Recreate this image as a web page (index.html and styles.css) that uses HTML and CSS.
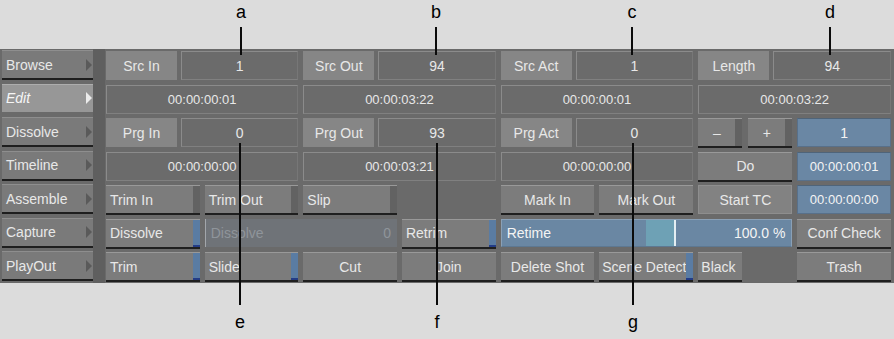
FILE: index.html
```html
<!DOCTYPE html>
<html lang="en">
<head>
    <meta charset="UTF-8">
    <title>Edit Menu</title>
    <link rel="stylesheet" href="styles.css">
</head>
<body>
    <div class="stage">
        <div class="panel">
            <!-- Left menu -->
            <nav class="menu">
                <div class="menu-btn"><span>Browse</span><i class="arrow"></i></div>
                <div class="menu-btn active"><span>Edit</span><i class="arrow"></i></div>
                <div class="menu-btn"><span>Dissolve</span><i class="arrow"></i></div>
                <div class="menu-btn"><span>Timeline</span><i class="arrow"></i></div>
                <div class="menu-btn"><span>Assemble</span><i class="arrow"></i></div>
                <div class="menu-btn"><span>Capture</span><i class="arrow"></i></div>
                <div class="menu-btn"><span>PlayOut</span><i class="arrow"></i></div>
            </nav>
            <div class="strip"></div>

            <!-- Main controls -->
            <main class="grid">
                <!-- row 1 -->
                <div class="group"><div class="label">Src In</div><div class="value">1</div></div>
                <div class="group"><div class="label">Src Out</div><div class="value">94</div></div>
                <div class="group"><div class="label">Src Act</div><div class="value">1</div></div>
                <div class="group"><div class="label">Length</div><div class="value">94</div></div>
                <!-- row 2 -->
                <div class="group"><div class="value time">00:00:00:01</div></div>
                <div class="group"><div class="value time">00:00:03:22</div></div>
                <div class="group"><div class="value time">00:00:00:01</div></div>
                <div class="group"><div class="value time">00:00:03:22</div></div>
                <!-- row 3 -->
                <div class="group"><div class="label">Prg In</div><div class="value">0</div></div>
                <div class="group"><div class="label">Prg Out</div><div class="value">93</div></div>
                <div class="group"><div class="label">Prg Act</div><div class="value">0</div></div>
                <div class="pair">
                    <div class="btn center"><span class="txt">–</span><span class="end"></span></div>
                    <div class="btn center"><span class="txt">+</span><span class="end"></span></div>
                </div>
                <div class="blue">1</div>
                <!-- row 4 -->
                <div class="group"><div class="value time">00:00:00:00</div></div>
                <div class="group"><div class="value time">00:00:03:21</div></div>
                <div class="group"><div class="value time">00:00:00:00</div></div>
                <div class="btn center"><span class="txt">Do</span></div>
                <div class="blue time">00:00:00:01</div>
                <!-- row 5 -->
                <div class="btn"><span class="txt">Trim In</span><span class="end"></span></div>
                <div class="btn"><span class="txt">Trim Out</span><span class="end"></span></div>
                <div class="btn"><span class="txt">Slip</span><span class="end"></span></div>
                <div class="empty"></div>
                <div class="btn center"><span class="txt">Mark In</span></div>
                <div class="btn center"><span class="txt">Mark Out</span></div>
                <div class="label flat">Start TC</div>
                <div class="blue time">00:00:00:00</div>
                <!-- row 6 -->
                <div class="btn"><span class="txt">Dissolve</span><span class="end on"></span></div>
                <div class="disabled span2"><span>Dissolve</span><span>0</span></div>
                <div class="btn"><span class="txt">Retrim</span><span class="end on"></span></div>
                <div class="slider span3">
                    <span class="fill"></span>
                    <span class="slider-txt">Retime</span>
                    <span class="slider-txt">100.0 %</span>
                </div>
                <div class="btn center"><span class="txt">Conf Check</span></div>
                <!-- row 7 -->
                <div class="btn"><span class="txt">Trim</span><span class="end on"></span></div>
                <div class="btn"><span class="txt">Slide</span><span class="end on"></span></div>
                <div class="btn center"><span class="txt">Cut</span></div>
                <div class="btn center"><span class="txt">Join</span></div>
                <div class="btn center"><span class="txt">Delete Shot</span></div>
                <div class="btn tight"><span class="txt">Scene Detect</span><span class="end on"></span></div>
                <div class="pair"><div class="btn tight"><span class="txt">Black</span></div></div>
                <div class="btn center"><span class="txt">Trash</span></div>
            </main>
        </div>

        <!-- Callouts -->
        <div class="callout top c-a"><span class="letter">a</span><span class="line"></span></div>
        <div class="callout top c-b"><span class="letter">b</span><span class="line"></span></div>
        <div class="callout top c-c"><span class="letter">c</span><span class="line"></span></div>
        <div class="callout top c-d"><span class="letter">d</span><span class="line"></span></div>
        <div class="callout bottom c-e"><span class="line"></span><span class="letter">e</span></div>
        <div class="callout bottom c-f"><span class="line"></span><span class="letter">f</span></div>
        <div class="callout bottom c-g"><span class="line"></span><span class="letter">g</span></div>
    </div>
</body>
</html>
```

FILE: styles.css
```css
body {
    margin: 0;
    background-color: #dcdcdc;
    font-family: "Liberation Sans", Arial, sans-serif;
}
.stage {
    position: relative;
    width: 894px;
    height: 339px;
    overflow: hidden;
}
.panel {
    margin-top: 49px;
    height: 234px;
    display: flex;
    background-color: #6a6a6a;
    color: #e8e8e8;
    font-size: 14px;
}
.menu {
    width: 91px;
    padding: 1px 0 0 2px;
    display: grid;
    grid-template-rows: repeat(7, 28px);
    row-gap: 5.5px;
}
.menu-btn {
    display: flex;
    align-items: center;
    justify-content: space-between;
    padding: 0 1px 0 4px;
    background-color: #7a7a7a;
    border-top: 1px solid #8e8e8e;
    box-shadow: 0 2px 0 #1e1e1e;
}
.menu-btn .arrow {
    width: 0;
    height: 0;
    border-left: 6px solid #5a5a5a;
    border-top: 6px solid transparent;
    border-bottom: 6px solid transparent;
}
.menu-btn.active {
    background-color: #979797;
    border-top-color: #adadad;
    box-shadow: none;
    font-style: italic;
    color: #f6f6f6;
}
.menu-btn.active .arrow {
    border-left-color: #ececec;
}
.strip {
    width: 12px;
    background-color: #5f5f5f;
}
.grid {
    flex: 1;
    padding: 2px 3px 0 1px;
    display: grid;
    grid-template-columns: repeat(8, 1fr);
    grid-template-rows: repeat(7, 29px);
    column-gap: 5px;
    row-gap: 4.5px;
}
.group {
    grid-column: span 2;
    display: flex;
    gap: 4px;
}
.label {
    width: 71px;
    display: flex;
    align-items: center;
    justify-content: center;
    background-color: #868686;
}
.label.flat {
    width: auto;
    background-color: #828282;
    border: 1px solid #8e8e8e;
}
.value {
    flex: 1;
    display: flex;
    align-items: center;
    justify-content: center;
    background-color: #6b6b6b;
    border: 1px solid #8b8b8b;
    border-right-color: #777;
    border-bottom-color: #808080;
}
.time {
    font-size: 13px;
}
.pair {
    display: flex;
    gap: 6px;
}
.pair .btn {
    width: 44px;
}
.btn {
    display: flex;
    align-items: stretch;
    height: 27px;
    background-color: #7c7c7c;
    border-top: 1px solid #999;
    box-shadow: 0 2px 0 #1f1f1f;
}
.btn .txt {
    flex: 1;
    display: flex;
    align-items: center;
    padding-left: 4px;
    white-space: nowrap;
}
.btn.center .txt {
    justify-content: center;
    padding-left: 0;
}
.btn.tight .txt {
    padding-left: 3px;
}
.btn .end {
    width: 7px;
    background-color: #626262;
}
.btn .end.on {
    background-color: #5a7ca3;
    border-bottom: 2px solid #233c86;
}
.blue {
    display: flex;
    align-items: center;
    justify-content: center;
    background-color: #6a87a4;
    border: 1px solid #58708a;
    border-top-color: #4f6479;
    color: #f4f4f4;
}
.span2 {
    grid-column: span 2;
}
.span3 {
    grid-column: span 3;
}
.disabled {
    display: flex;
    align-items: center;
    justify-content: space-between;
    padding: 0 6px 0 5px;
    background-color: #6f7378;
    border-left: 1px solid #a2a6ab;
    color: #8f959b;
    height: 28px;
}
.slider {
    position: relative;
    display: flex;
    align-items: center;
    justify-content: space-between;
    padding: 0 6px 0 5px;
    background-color: #6a87a3;
    border: 1px solid #8aa0b6;
    border-bottom-color: #5d7892;
    color: #f4f4f4;
    height: 26px;
}
.slider .fill {
    position: absolute;
    left: 144px;
    top: 0;
    bottom: 0;
    width: 28px;
    background-color: #6ea1b5;
    border-right: 2px solid #e4eef2;
}
.slider-txt {
    position: relative;
}
.callout {
    position: absolute;
    display: flex;
    flex-direction: column;
    align-items: center;
    width: 20px;
    margin-left: -10px;
    color: #000;
    font-size: 18px;
    line-height: 20px;
}
.callout .line {
    width: 2px;
    background-color: #0b0b0b;
}
.callout.top {
    top: 2px;
}
.callout.top .line {
    margin-top: 5px;
    height: 28px;
}
.callout.bottom {
    top: 143px;
}
.callout.bottom .line {
    height: 162px;
    margin-bottom: 7px;
}
.c-a { left: 241px; }
.c-b { left: 436px; }
.c-c { left: 632px; }
.c-d { left: 830px; }
.c-e { left: 240px; }
.c-f { left: 437px; }
.c-g { left: 633px; }
```
